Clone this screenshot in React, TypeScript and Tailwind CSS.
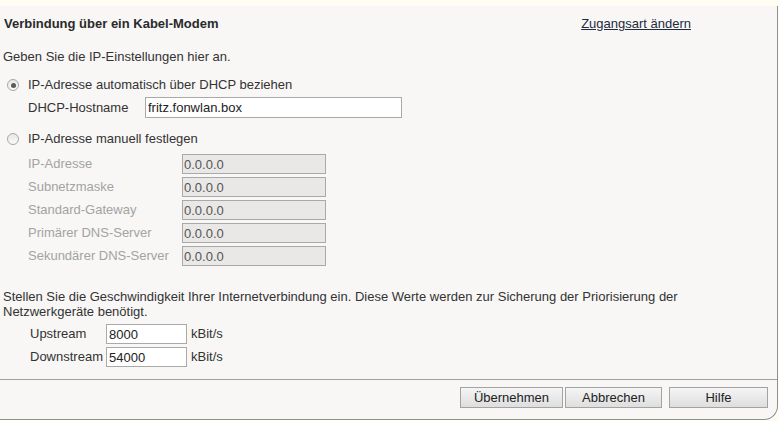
import React from 'react';

function Radio({ checked }: { checked?: boolean }) {
  return (
    <span className="w-[12px] h-[12px] rounded-full border border-[#a8a8a8] bg-gradient-to-b from-[#e6e6e6] to-[#fafafa] flex items-center justify-center shrink-0">
      {checked && <span className="w-[5px] h-[5px] rounded-full bg-[#5a5a5a]" />}
    </span>
  );
}

const manualRows = [
  'IP-Adresse',
  'Subnetzmaske',
  'Standard-Gateway',
  'Primärer DNS-Server',
  'Sekundärer DNS-Server'
];

export default function App() {
  return (
    <div className="w-[779px] h-[421px] bg-[#fffdf1] font-['Liberation_Sans',Arial,sans-serif] text-[13px] leading-[16px] text-[#333] overflow-hidden">
      <div className="mt-[6px] mr-[1px] h-[414px] bg-[#f8f7f5] border-r border-b border-[#8f8f8f] rounded-br-[14px] flex flex-col">
        {/* Header */}
        <div className="flex items-center pt-[10px] pl-[4px]">
          <div className="flex-1 font-bold text-[#2a2a2a]">Verbindung über ein Kabel-Modem</div>
          <a className="mr-[86px] underline text-[#1d2b3f] cursor-pointer">Zugangsart ändern</a>
        </div>

        <div className="mt-[17px] pl-[3px]">Geben Sie die IP-Einstellungen hier an.</div>

        {/* DHCP */}
        <div className="mt-[12px] flex items-center pl-[7px] gap-[9px]">
          <Radio checked />
          <span>IP-Adresse automatisch über DHCP beziehen</span>
        </div>
        <div className="mt-[4px] flex items-center pl-[28px]">
          <span className="w-[117px]">DHCP-Hostname</span>
          <input
            readOnly
            value="fritz.fonwlan.box"
            className="w-[257px] h-[21px] bg-white border border-[#a9a9a9] px-[2px] text-[13px] text-[#222] outline-none" />
        </div>

        {/* Manual */}
        <div className="mt-[13px] flex items-center pl-[7px] gap-[9px]">
          <Radio />
          <span>IP-Adresse manuell festlegen</span>
        </div>
        <div className="mt-[7px] flex flex-col gap-[3px] pl-[28px]">
          {manualRows.map((label) =>
          <div key={label} className="flex items-center">
              <span className="w-[154px] text-[#a3a3a3]">{label}</span>
              <input
              readOnly
              disabled
              value="0.0.0.0"
              className="w-[144px] h-[20px] bg-[#e9e8e6] border border-[#a9a9a9] px-[1px] text-[13px] text-[#555] outline-none" />
            </div>
          )}
        </div>

        {/* Speed */}
        <p className="mt-[23px] pl-[3px] leading-[15px] pr-[80px]">
          Stellen Sie die Geschwindigkeit Ihrer Internetverbindung ein. Diese Werte werden zur Sicherung der Priorisierung der Netzwerkgeräte benötigt.
        </p>
        <div className="mt-[5px] flex flex-col gap-[3px] pl-[30px]">
          {[
          ['Upstream', '8000'],
          ['Downstream', '54000']].
          map(([label, val]) =>
          <div key={label} className="flex items-center">
              <span className="w-[76px]">{label}</span>
              <input
              readOnly
              value={val}
              className="w-[81px] h-[20px] bg-white border border-[#a9a9a9] px-[2px] text-[13px] text-[#222] outline-none" />
              <span className="ml-[4px]">kBit/s</span>
            </div>
          )}
        </div>

        <div className="mt-[12px] border-t border-[#a0a0a0]" />

        {/* Buttons */}
        <div className="mt-[7px] flex justify-end pr-[9px]">
          <button className="w-[103px] h-[21px] border border-[#a3a3a3] bg-gradient-to-b from-[#f5f5f5] to-[#dedede] text-[13px] text-[#222]">Übernehmen</button>
          <button className="ml-[2px] w-[97px] h-[21px] border border-[#a3a3a3] bg-gradient-to-b from-[#f5f5f5] to-[#dedede] text-[13px] text-[#222]">Abbrechen</button>
          <button className="ml-[7px] w-[99px] h-[21px] border border-[#a3a3a3] bg-gradient-to-b from-[#f5f5f5] to-[#dedede] text-[13px] text-[#222]">Hilfe</button>
        </div>
      </div>
    </div>);

}
